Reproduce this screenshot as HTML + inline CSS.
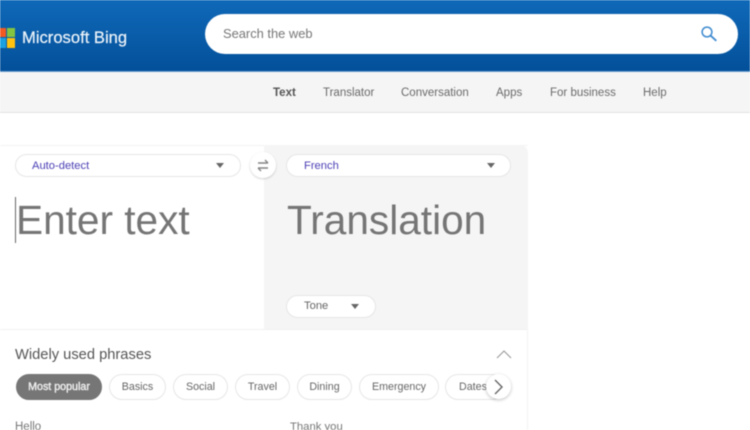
<!DOCTYPE html>
<html><head><meta charset="utf-8"><style>
html,body{margin:0;padding:0;background:#fff}
body{width:750px;height:430px;overflow:hidden;position:relative;font-family:"Liberation Sans",sans-serif}
#w{position:absolute;left:0;top:0;width:750px;height:430px;overflow:hidden;filter:blur(.4px)}
.a{position:absolute;white-space:nowrap}
.pill{position:absolute;box-sizing:border-box;background:#fff;border:1px solid #e6e6e6;border-radius:20px}
.chip{position:absolute;top:374px;height:26px;box-sizing:border-box;border:1px solid #e6e6e6;border-radius:13px;background:#fff;font-size:10.7px;line-height:24px;text-align:center;color:#666}
.nav{position:absolute;top:85.5px;font-size:11.5px;line-height:14px;color:#6a6a6a;white-space:nowrap}
.tri{position:absolute;width:0;height:0;border-left:4.5px solid transparent;border-right:4.5px solid transparent;border-top:5px solid #666}
.lang{position:absolute;font-size:11.2px;line-height:14px;color:#4a3fb5;white-space:nowrap}
</style></head><body><div id="w">
<div class="a" style="left:0;top:0;width:750px;height:71px;background:linear-gradient(#0f69b8,#04509a)"></div>
<div class="a" style="left:0;top:71px;width:750px;height:1px;background:#6a9fcf"></div>
<div class="a" style="left:0;top:72px;width:750px;height:40px;background:#f5f5f5"></div>
<div class="a" style="left:0;top:112px;width:750px;height:1px;background:#e3e3e3"></div>
<div class="a" style="left:0;top:27.5px;width:5.5px;height:9.5px;background:#f25a22"></div>
<div class="a" style="left:6.5px;top:27.5px;width:8.5px;height:9.5px;background:#84c441"></div>
<div class="a" style="left:0;top:38px;width:5.5px;height:9.5px;background:#1ba1e2"></div>
<div class="a" style="left:6.5px;top:38px;width:8.5px;height:9.5px;background:#ffc20e"></div>
<div class="a" style="left:22px;top:28px;font-size:16.6px;line-height:20px;color:#eef4fa;-webkit-text-stroke:.2px #eef4fa">Microsoft Bing</div>
<div class="a" style="left:205px;top:14px;width:533px;height:40px;background:#fff;border-radius:20px"></div>
<div class="a" style="left:223px;top:26px;font-size:12.9px;line-height:16px;color:#777">Search the web</div>
<svg class="a" style="left:700px;top:25px" width="18" height="18" viewBox="0 0 18 18" fill="none" stroke="#3f8bd0"><circle cx="7" cy="7" r="4.9" stroke-width="1.5"/><path d="M10.6 10.6L16.3 15.8" stroke-width="1.8"/></svg>
<div class="nav" style="left:273px;font-weight:bold;color:#555">Text</div>
<div class="nav" style="left:323px">Translator</div>
<div class="nav" style="left:401px">Conversation</div>
<div class="nav" style="left:496px">Apps</div>
<div class="nav" style="left:550px">For business</div>
<div class="nav" style="left:643px">Help</div>
<div class="a" style="left:0;top:145px;width:528px;height:1px;background:#f4f4f4"></div>
<div class="a" style="left:264px;top:145px;width:264px;height:184px;background:#f5f5f5;border-top-right-radius:8px"></div>
<div class="a" style="left:0;top:329px;width:528px;height:1px;background:#f1f1f1"></div>
<div class="a" style="left:527px;top:329px;width:1px;height:101px;background:#f4f4f4"></div>
<div class="pill" style="left:15px;top:154px;width:226px;height:23px"></div>
<div class="lang" style="left:32px;top:158.5px">Auto-detect</div>
<div class="tri" style="left:216px;top:163px"></div>
<div class="pill" style="left:286px;top:154px;width:225px;height:23px"></div>
<div class="lang" style="left:304px;top:158.5px">French</div>
<div class="tri" style="left:487px;top:163px"></div>
<div class="a" style="left:250px;top:152px;width:26px;height:26px;border-radius:50%;background:#fff;box-shadow:0 1px 2px rgba(0,0,0,.18)"></div>
<svg class="a" style="left:256px;top:158px" width="14" height="15" viewBox="0 0 14 15" fill="none" stroke="#858585" stroke-width="1.4"><path d="M2 5H12M9 2L12 5M12 10H2M5 13L2 10"/></svg>
<div class="a" style="left:15px;top:197px;width:1px;height:46px;background:#666"></div>
<div class="a" style="left:16px;top:197px;font-size:40.6px;line-height:46px;color:#757575">Enter text</div>
<div class="a" style="left:287px;top:197px;font-size:40.6px;line-height:46px;color:#757575">Translation</div>
<div class="pill" style="left:286px;top:295px;width:90px;height:23px"></div>
<div class="a" style="left:304px;top:299px;font-size:11.2px;line-height:14px;color:#666">Tone</div>
<div class="tri" style="left:351px;top:304px"></div>
<div class="a" style="left:15px;top:346px;font-size:14.7px;line-height:18px;color:#555">Widely used phrases</div>
<svg class="a" style="left:496px;top:349px" width="16" height="11" viewBox="0 0 16 11" fill="none" stroke="#999" stroke-width="1.1"><path d="M1 9L8 2L15 9"/></svg>
<div class="chip" style="left:16px;width:86px;background:#767676;border-color:#767676;color:#eee;-webkit-text-stroke:.4px #eee">Most popular</div>
<div class="chip" style="left:109px;width:57px">Basics</div>
<div class="chip" style="left:173px;width:55px">Social</div>
<div class="chip" style="left:235px;width:55px">Travel</div>
<div class="chip" style="left:297px;width:55px">Dining</div>
<div class="chip" style="left:359px;width:80px">Emergency</div>
<div class="chip" style="left:445px;width:60px;text-align:left;padding-left:13px">Dates</div>
<div class="a" style="left:486px;top:374px;width:25px;height:25px;border-radius:50%;background:#fff;box-shadow:0 1px 3px rgba(0,0,0,.25)"></div>
<svg class="a" style="left:493px;top:379px" width="11" height="16" viewBox="0 0 11 16" fill="none" stroke="#666" stroke-width="1.4"><path d="M2 1L9 8L2 15"/></svg>
<div class="a" style="left:15px;top:419.5px;font-size:11.5px;line-height:14px;color:#777">Hello</div>
<div class="a" style="left:290px;top:419.5px;font-size:11.3px;line-height:14px;color:#777">Thank you</div>
</div></body></html>
